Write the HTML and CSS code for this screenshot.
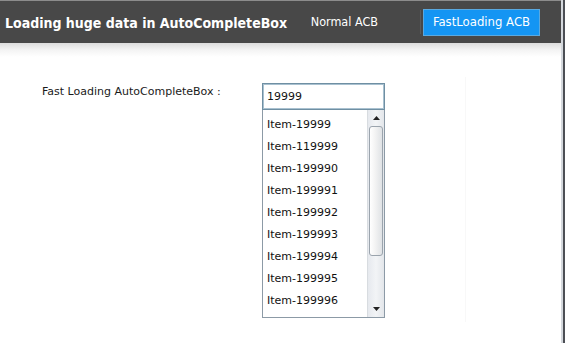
FILE: index.html
```html
<!DOCTYPE html>
<html>
<head>
<meta charset="utf-8">
<link rel="stylesheet" href="styles.css">
</head>
<body>
<div class="window">
  <div class="main">
    <header class="topbar">
      <h1 class="title">Loading huge data in AutoCompleteBox</h1>
      <nav class="nav">
        <span class="nav-link">Normal ACB</span>
        <span class="nav-sep"></span>
        <span class="nav-btn">FastLoading ACB</span>
      </nav>
    </header>
    <div class="shade"></div>
    <section class="content">
      <label class="field-label">Fast Loading AutoCompleteBox :</label>
      <div class="acb">
        <div class="acb-input">19999</div>
        <div class="acb-drop">
          <ul class="acb-list">
            <li>Item-19999</li>
            <li>Item-119999</li>
            <li>Item-199990</li>
            <li>Item-199991</li>
            <li>Item-199992</li>
            <li>Item-199993</li>
            <li>Item-199994</li>
            <li>Item-199995</li>
            <li>Item-199996</li>
          </ul>
          <div class="sbar">
            <div class="sbar-btn"><svg width="7" height="4" viewBox="0 0 7 4"><path d="M0 4 L3.5 0 L7 4 Z" fill="#222"/></svg></div>
            <div class="sbar-track">
              <div class="sbar-thumb"></div>
            </div>
            <div class="sbar-btn"><svg width="7" height="4" viewBox="0 0 7 4"><path d="M0 0 L3.5 4 L7 0 Z" fill="#222"/></svg></div>
          </div>
        </div>
      </div>
      <div class="faint-line"></div>
    </section>
  </div>
  <div class="edge"></div>
</div>
</body>
</html>
```

FILE: styles.css
```css
html, body {
  margin: 0;
  padding: 0;
  background: #ffffff;
}
body {
  width: 565px;
  height: 343px;
  overflow: hidden;
  font-family: "DejaVu Sans", Verdana, sans-serif;
}
.window {
  display: flex;
  height: 343px;
}
.main {
  width: 561px;
  display: flex;
  flex-direction: column;
}
.edge {
  width: 4px;
  border-left: 2px solid #d4d8dd;
  background: #4c4f55;
  box-sizing: border-box;
}
.topbar {
  height: 43px;
  box-sizing: border-box;
  background: #484848;
  border-top: 1px solid #8c8c8c;
  display: flex;
  align-items: center;
  justify-content: space-between;
  padding: 0 21px 0 5px;
}
.title {
  margin: 0;
  font-family: "DejaVu Sans Condensed", "DejaVu Sans", sans-serif;
  font-weight: bold;
  font-size: 14px;
  color: #ffffff;
  padding-top: 1px;
}
.nav {
  display: flex;
  align-items: center;
  height: 27px;
}
.nav-link {
  font-family: "DejaVu Sans Condensed", "DejaVu Sans", sans-serif;
  font-size: 12.5px;
  color: #ffffff;
  padding: 0 42px 2px 0;
}
.nav-sep {
  width: 1px;
  height: 24px;
  background: #5a5a5a;
  margin-right: 2px;
}
.nav-btn {
  font-family: "DejaVu Sans Condensed", "DejaVu Sans", sans-serif;
  font-size: 13px;
  color: #ffffff;
  background: #1495f3;
  border: 1px solid #5aa9e0;
  width: 117px;
  height: 27px;
  box-sizing: border-box;
  padding: 0 0 2px 0;
  display: flex;
  align-items: center;
  justify-content: center;
}
.shade {
  height: 14px;
  background: linear-gradient(#dcdcdc, #f4f4f4 50%, #ffffff);
}
.content {
  position: relative;
  flex: 1;
  display: flex;
  align-items: flex-start;
  padding: 26px 0 0 42px;
}
.field-label {
  width: 220px;
  font-family: "DejaVu Sans", sans-serif;
  font-size: 11px;
  color: #1a1a1a;
  padding-top: 2px;
}
.acb {
  width: 123px;
}
.acb-input {
  height: 27px;
  box-sizing: border-box;
  border: 1px solid #6f8fa3;
  box-shadow: inset 0 0 0 1px #a9c1d0;
  font-size: 11px;
  color: #111;
  padding: 6px 0 0 4px;
}
.acb-drop {
  display: flex;
  height: 208px;
  box-sizing: border-box;
  border: 1px solid #8c9aa6;
  border-top: none;
  background: #fff;
}
.acb-list {
  list-style: none;
  margin: 0;
  padding: 4px 0 0 4px;
  flex: 1;
}
.acb-list li {
  height: 22px;
  line-height: 22px;
  font-size: 11px;
  color: #111;
}
.sbar {
  width: 16px;
  display: flex;
  flex-direction: column;
  background: linear-gradient(90deg, #e6e9ee, #f2f4f6 50%, #e3e6ea);
  border-left: 1px solid #d8dce0;
}
.sbar-btn {
  height: 16px;
  display: flex;
  align-items: center;
  justify-content: center;
}
.sbar-track {
  flex: 1;
  padding: 0 1px;
}
.sbar-thumb {
  height: 130px;
  box-sizing: border-box;
  border: 1px solid #9ba4ad;
  border-radius: 3px;
  background: linear-gradient(90deg, #ffffff, #f4f4f4 40%, #dfe2e5);
}
.faint-line {
  position: absolute;
  left: 465px;
  top: 20px;
  width: 1px;
  height: 245px;
  background: #f8f8f8;
}
```
